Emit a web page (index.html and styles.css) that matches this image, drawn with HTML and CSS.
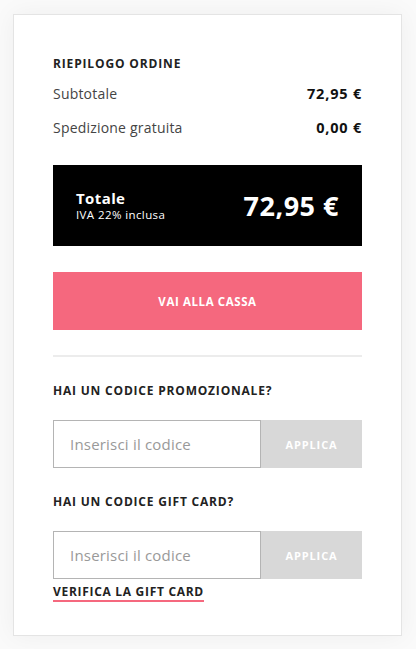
FILE: index.html
```html
<!DOCTYPE html>
<html lang="it">
<head>
    <meta charset="UTF-8">
    <meta name="viewport" content="width=device-width, initial-scale=1.0">
    <title>Riepilogo ordine</title>
    <link rel="stylesheet" href="styles.css">
</head>
<body>
    <div class="summary">
        <h2 class="summary-title">Riepilogo ordine</h2>
        <div class="summary-row">
            <span>Subtotale</span>
            <strong>72,95 €</strong>
        </div>
        <div class="summary-row">
            <span>Spedizione gratuita</span>
            <strong>0,00 €</strong>
        </div>

        <div class="total-box">
            <div class="total-label">
                <strong>Totale</strong>
                <span>IVA 22% inclusa</span>
            </div>
            <div class="total-amount">72,95 €</div>
        </div>

        <button class="checkout-button">Vai alla cassa</button>

        <hr class="divider">

        <h3 class="code-title">Hai un codice promozionale?</h3>
        <div class="code-form">
            <input type="text" placeholder="Inserisci il codice">
            <button class="apply-button">Applica</button>
        </div>

        <h3 class="code-title">Hai un codice gift card?</h3>
        <div class="code-form">
            <input type="text" placeholder="Inserisci il codice">
            <button class="apply-button">Applica</button>
        </div>
        <a href="#" class="verify-link">Verifica la gift card</a>
    </div>
</body>
</html>
```

FILE: styles.css
```css
body {
    font-family: "Open Sans", Arial, sans-serif;
    background-color: #fafafa;
    color: #222;
    margin: 0;
    padding: 14px 15px 14px 13px;
}
.summary {
    width: 309px;
    background-color: white;
    border: 1px solid #e4e4e4;
    padding: 41px 39px 33px 39px;
    box-shadow: 0 0 24px rgba(0, 0, 0, 0.05);
}
.summary-title {
    font-size: 12px;
    font-weight: 700;
    letter-spacing: 0.85px;
    text-transform: uppercase;
    margin: 0 0 12px;
    line-height: 16px;
}
.summary-row {
    display: flex;
    justify-content: space-between;
    align-items: center;
    font-size: 14px;
    line-height: 20px;
    margin-bottom: 14px;
}
.summary-row span {
    color: #444;
    letter-spacing: 0.2px;
}
.summary-row strong {
    font-size: 14.5px;
    font-weight: 700;
    letter-spacing: 0.8px;
    color: #111;
}
.total-box {
    display: flex;
    justify-content: space-between;
    align-items: center;
    background-color: #000;
    color: white;
    height: 81px;
    padding: 0 23px;
    margin-top: 27px;
    box-sizing: border-box;
}
.total-label strong {
    display: block;
    font-size: 15px;
    letter-spacing: 0.4px;
    line-height: 18px;
}
.total-label span {
    display: block;
    font-size: 11.5px;
    letter-spacing: 0.4px;
    line-height: 15px;
}
.total-amount {
    font-size: 27px;
    font-weight: 700;
    letter-spacing: 0.5px;
}
.checkout-button {
    display: block;
    width: 100%;
    height: 58px;
    margin-top: 26px;
    background-color: #f5687e;
    color: white;
    border: none;
    font-family: inherit;
    font-size: 11.5px;
    font-weight: 700;
    letter-spacing: 0.6px;
    text-transform: uppercase;
    cursor: pointer;
}
.divider {
    border: none;
    border-top: 2px solid #ececec;
    margin: 25px 0 0;
}
.code-title {
    font-size: 12px;
    font-weight: 700;
    letter-spacing: 0.8px;
    text-transform: uppercase;
    margin: 26px 0 21px;
    line-height: 16px;
}
.code-form {
    display: flex;
    height: 48px;
}
.code-form input {
    flex: 1;
    border: 1px solid #b4b4b4;
    padding: 0 16px;
    font-family: inherit;
    font-size: 15px;
    letter-spacing: 0.2px;
    color: #222;
    outline: none;
    min-width: 0;
}
.code-form input::placeholder {
    color: #999;
}
.apply-button {
    width: 101px;
    background-color: #d8d8d8;
    color: white;
    border: none;
    font-family: inherit;
    font-size: 11px;
    font-weight: 700;
    letter-spacing: 0.9px;
    text-transform: uppercase;
}
.verify-link {
    display: inline-block;
    margin-top: 4px;
    font-size: 12px;
    font-weight: 700;
    letter-spacing: 0.7px;
    text-transform: uppercase;
    color: #222;
    text-decoration: none;
    border-bottom: 2px solid #f5687e;
    line-height: 16px;
}
```
